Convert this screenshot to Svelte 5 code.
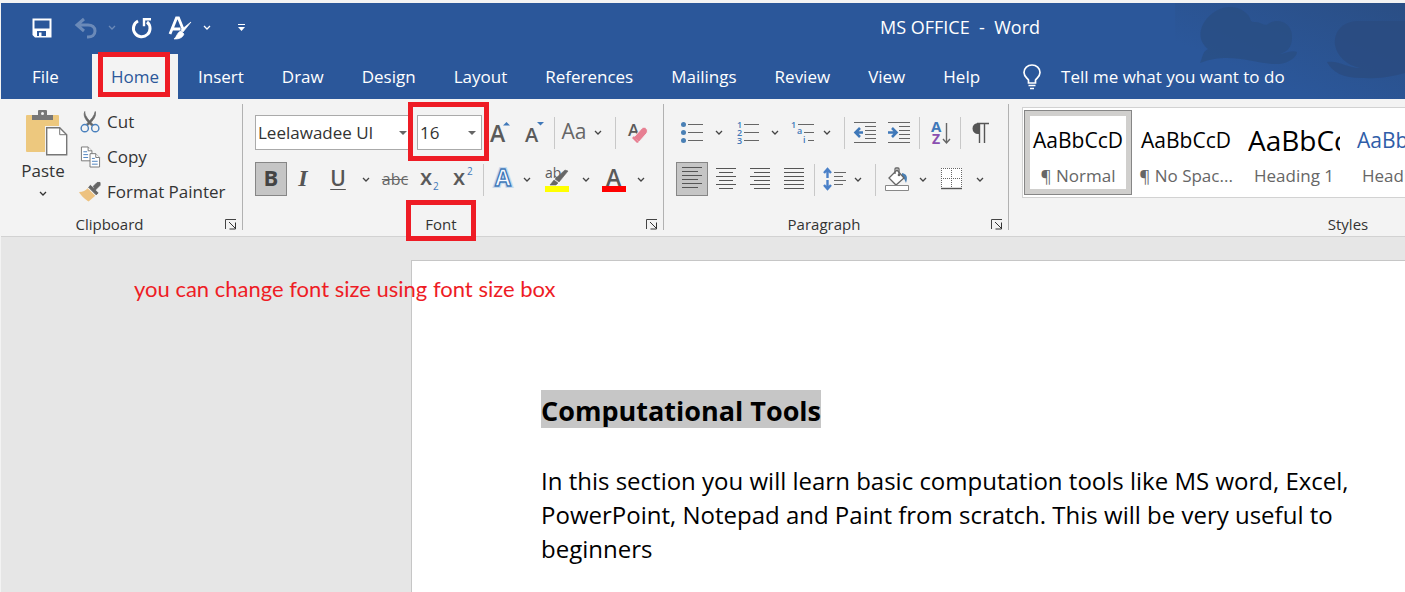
<script>
  const tabs = ['Insert', 'Draw', 'Design', 'Layout', 'References', 'Mailings', 'Review', 'View', 'Help'];
  const styles = [
    { sample: 'AaBbCcD', name: '¶ Normal', kind: 'body', selected: true },
    { sample: 'AaBbCcD', name: '¶ No Spac...', kind: 'body' },
    { sample: 'AaBbCc', name: 'Heading 1', kind: 'big' },
    { sample: 'AaBbCcD', name: 'Heading 2', kind: 'blue' }
  ];
  const aligns = [
    { label: 'Align left', x: [0, 0, 0, 0, 0, 0], w: [20, 16, 20, 16, 20, 16] },
    { label: 'Center', x: [0, 3, 0, 3, 0, 3], w: [20, 14, 20, 14, 20, 14] },
    { label: 'Align right', x: [0, 4, 0, 4, 0, 4], w: [20, 16, 20, 16, 20, 16] },
    { label: 'Justify', x: [0, 0, 0, 0, 0, 0], w: [20, 20, 20, 20, 20, 20] }
  ];
</script>

{#snippet chevron(label)}
  <button class="tool" aria-label={label}>
    <svg width="8" height="5" viewBox="0 0 8 5"><path d="M1 1l3 3 3-3" fill="none" stroke="currentColor" stroke-width="1.3" /></svg>
  </button>
{/snippet}

{#snippet launcher(label)}
  <button class="launcher" aria-label={label}>
    <svg width="12" height="11" viewBox="0 0 12 11" fill="none" stroke="#444"><path d="M.5 10V.5H11" /><path d="M4 3l6 6M10.500 3.500v6.500H4.500" stroke="#333" /></svg>
  </button>
{/snippet}

<div class="app">
  <header>
    <svg class="art" width="230" height="96" viewBox="0 0 230 96" aria-hidden="true">
      <defs><linearGradient id="shade" x1="0" y1="1" x2="1" y2="0"><stop offset=".3" stop-color="#2a4d82" stop-opacity="0" /><stop offset="1" stop-color="#2a4d82" stop-opacity=".9" /></linearGradient></defs>
      <rect width="230" height="96" fill="url(#shade)" />
      <path d="M25 60C28 54 27 49 33 46 24 39 23 28 30 18 41 2 61 0 71 10 77 15 74 19 79 19 86 18 89 24 93 21 103 14 118 20 117 35 117 44 112 49 105 51 112 50 117 47 122 49 122 54 114 60 104 61 78 62 58 48 25 60Z" fill="#2a4d82" opacity=".75" />
      <path d="M230 18H183C165 19 159 30 160 42 162 53 171 62 185 65 172 65 164 57 152 59 157 70 171 76 190 75 207 76 218 73 230 70Z" fill="#2a4b7f" opacity=".8" />
    </svg>
    <div class="titlebar">
      <div class="quick">
        <button aria-label="Save"><svg width="20" height="20" viewBox="0 0 20 20"><path fill-rule="evenodd" d="M.5.500h19v19H3l-2.500-2.500zM2.500 2.500v8h15v-8zM5 13v5h9v-5z" fill="#fff" /><path d="M7 14.500h2.500V19H7z" fill="#fff" /></svg></button>
        <button aria-label="Undo" class="faded undo"><svg width="22" height="20" viewBox="0 0 22 20" fill="none" stroke="#fff" stroke-width="3"><path d="M9 1L2 7l7 6M2 7h11c4 0 7 2 7 6s-3 6-7 6h-1" /></svg></button>
        <span class="faded">{@render chevron('Undo history')}</span>
        <button aria-label="Repeat"><svg width="22" height="22" viewBox="0 0 22 22" fill="none" stroke="#fff" stroke-width="3"><path d="M7 4a8.300 8.300 0 1 0 9 1" /><path d="M20 2.300h-7v7" stroke-width="2.400" /></svg></button>
        <button aria-label="Styles painter"><svg width="24" height="24" viewBox="0 0 24 24"><path d="M2 18L8.500 2h2L15 13M4.500 13h8" fill="none" stroke="#fff" stroke-width="2.800" /><path d="M23 6l-8 10-2-2zM13 15l3 3c-2 5-7 5-10 5 3-2 3-7 7-8z" fill="#fff" stroke="#fff" stroke-width=".7" /></svg></button>
        {@render chevron('Painter options')}
        <button aria-label="Customize toolbar"><svg width="9" height="8" viewBox="0 0 9 8"><path d="M1 .5h7" stroke="#fff" /><path d="M1 3h7L4.500 7z" fill="#fff" /></svg></button>
      </div>
      <h1>MS OFFICE&nbsp; -&nbsp; Word</h1>
    </div>
    <nav>
      <a class="file" href="#file">File</a>
      <a class="active" href="#home">Home<span class="mark mark-home"></span></a>
      {#each tabs as tab}<a href="#{tab}">{tab}</a>{/each}
      <button class="tell">
        <svg width="18" height="26" viewBox="0 0 18 26" fill="none" stroke="#fff" stroke-width="1.700"><path d="M5.500 19v-3C3 13 1 12 1 8.500a8 7.500 0 0 1 16 0c0 3.500-2 4.500-4.500 7.500v3zM5.500 21.500h7M7 24.500h4" /></svg>
        Tell me what you want to do
      </button>
    </nav>
  </header>

  <section class="ribbon">
    <div class="group clipboard">
      <div class="clip-body">
        <button class="paste">
          <svg class="board" width="42" height="46" viewBox="0 0 42 46"><rect y="5" width="33" height="37" rx="1" fill="#edc87e" /><path d="M6 10V5h6V1q0-1 1-1h7q1 0 1 1v4h6v5z" fill="#777" /><circle cx="16.500" cy="3.500" r="1.500" fill="#f3f3f3" /><path d="M19 16h15l8 8v22H19z" fill="#f3f3f3" /><path d="M20.700 17.700h13l7 7v20h-20z" fill="#fff" stroke="#777" stroke-width="1.400" /><path d="M33.700 17.700v7h7" fill="none" stroke="#777" /></svg>
          <span>Paste</span>
          <svg width="8" height="5" viewBox="0 0 8 5"><path d="M1 1l3 3 3-3" fill="none" stroke="#333" stroke-width="1.300" /></svg>
        </button>
        <div class="clip-list">
          <button><svg width="21" height="22" viewBox="0 0 22 22" fill="none"><path d="M5 0c0 4 2 7 9 14l-2 1C6 9 3 5 5 0zM16 0c1 5-1 8-8 15l-1-2c5-5 8-8 9-13z" fill="#666" stroke="#666" stroke-width=".8" /><circle cx="5" cy="17.500" r="3.800" stroke="#4a80bd" stroke-width="1.500" /><circle cx="16" cy="17.500" r="3.800" stroke="#4a80bd" stroke-width="1.500" /></svg>Cut</button>
          <button><svg width="21" height="22" viewBox="0 0 22 22" fill="#fff" stroke="#777"><path d="M1.500.5h7l4 4V15h-11z" /><path d="M8.500.5v4h4" /><path d="M3.500 5.500h4M3.500 8.500h5M3.500 11.500h5" stroke="#4a80bd" /><path d="M10.500 7.500h6l4 4v10h-10z" /><path d="M16.500 7.500v4h4" /><path d="M12.500 12.500h3M12.500 15.500h6M12.500 18.500h6" stroke="#4a80bd" /></svg>Copy</button>
          <button><svg width="21" height="22" viewBox="0 0 22 22"><path d="M-1 11c4 0 7-2 9-4l8 8-7 6C6 19 1 15-1 11z" fill="#edc280" /><path d="M9 6l2-2 8 8-2 2zM14 5l4-4 3 0v3l-5 5z" fill="#666" stroke="#666" /></svg>Format Painter</button>
        </div>
      </div>
      <footer>Clipboard{@render launcher('Clipboard options')}</footer>
    </div>

    <div class="group font">
      <div class="rows">
        <div class="row font-top">
          <label class="combo family"><select aria-label="Font"><option>Leelawadee UI</option></select></label>
          <label class="combo"><select aria-label="Font size"><option>16</option></select><span class="mark mark-size"></span></label>
          <button class="tool" aria-label="Grow font"><svg width="22" height="24" viewBox="0 0 22 24"><text x="1" y="21" font-size="23" font-weight="600">A</text><path d="M14 4.500h7L17.500 1z" fill="#3f78b9" /></svg></button>
          <button class="tool" aria-label="Shrink font"><svg width="22" height="24" viewBox="0 0 22 24"><text x="1" y="21" font-size="20" font-weight="600">A</text><path d="M13 1h7l-3.500 3.500z" fill="#3f78b9" /></svg></button>
          <i class="sep"></i>
          <button class="tool case">Aa</button>
          {@render chevron('Change case')}
          <i class="sep"></i>
          <button class="tool" aria-label="Clear formatting"><svg width="22" height="24" viewBox="0 0 22 24"><text x="1" y="15" font-size="17" font-weight="600">A</text><path d="M7 16L15 7q2-2 4 0l1 1q1 2 0 4l-8 9z" fill="#e77f92" stroke="#f3f3f3" /><path d="M5 17l5 5 2-1-5-6z" fill="#e77f92" /></svg></button>
        </div>
        <div class="row font-bottom">
          <button class="tool on bold">B</button>
          <button class="tool italic">I</button>
          <button class="tool under">U</button>
          {@render chevron('Underline options')}
          <button class="tool strike">abc</button>
          <button class="tool" aria-label="Subscript"><svg width="20" height="24" viewBox="0 0 20 24"><text x="0" y="17" font-size="22" font-weight="600">x</text><text class="blue" x="13" y="22" font-size="10">2</text></svg></button>
          <button class="tool" aria-label="Superscript"><svg width="20" height="24" viewBox="0 0 20 24"><text x="0" y="17" font-size="22" font-weight="600">x</text><text class="blue" x="14" y="7" font-size="10">2</text></svg></button>
          <i class="sep"></i>
          <button class="tool" aria-label="Text effects"><svg width="22" height="24" viewBox="0 0 22 24"><text class="outline halo" x="3" y="18" font-size="23" font-weight="700">A</text><text class="outline" x="3" y="18" font-size="23" font-weight="700">A</text></svg></button>
          {@render chevron('Text effect options')}
          <button class="tool" aria-label="Highlight"><svg width="24" height="24" viewBox="0 0 24 24"><text x="0" y="10" font-size="14">ab</text><path d="M23 3l-9 11-4-3L20 2zM9 12l4 3-2 2H5z" fill="#666" stroke="#666" stroke-width=".6" /><path d="M0 18h24v6H0z" fill="#ff0" /></svg></button>
          {@render chevron('Highlight colors')}
          <button class="tool" aria-label="Font color"><svg width="24" height="24" viewBox="0 0 24 24"><text x="4" y="18" font-size="23" font-weight="600">A</text><path d="M0 18h24v6H0z" fill="#f00" /></svg></button>
          {@render chevron('Font colors')}
        </div>
      </div>
      <footer><span>Font<span class="mark mark-font"></span></span>{@render launcher('Font options')}</footer>
    </div>

    <div class="group paragraph">
      <div class="rows">
        <div class="row para-top">
          <button class="tool" aria-label="Bullets"><svg width="22" height="22" viewBox="0 0 22 22"><g fill="#4a80b5"><circle cx="2.500" cy="2.500" r="2.500" /><circle cx="2.500" cy="10.500" r="2.500" /><circle cx="2.500" cy="18.500" r="2.500" /></g><path d="M7 2.500h15M7 10.500h15M7 18.500h15" stroke="#666" /></svg></button>
          {@render chevron('Bullet library')}
          <button class="tool" aria-label="Numbering"><svg width="22" height="24" viewBox="0 0 22 24"><g class="blue" font-size="9" font-weight="600"><text x="0" y="7">1</text><text x="0" y="15">2</text><text x="0" y="23">3</text></g><path d="M7 3.500h15M7 11.500h15M7 19.500h15" stroke="#666" /></svg></button>
          {@render chevron('Number library')}
          <button class="tool" aria-label="Multilevel list"><svg width="22" height="24" viewBox="0 0 22 24"><g class="blue" font-size="9" font-weight="600"><text x="-1" y="7">1</text><text x="5" y="13">a</text><text x="11" y="22">i</text></g><path d="M6 3.500h16M12 11.500h10M16 19.500h6" stroke="#666" /></svg></button>
          {@render chevron('List library')}
          <i class="sep"></i>
          <button class="tool" aria-label="Decrease indent"><svg width="22" height="22" viewBox="0 0 22 22"><path d="M0 .5h22M11 4.500h11M11 8.500h11M11 12.500h11M11 16.500h11M0 20.500h22" stroke="#666" /><path d="M9 10.500H2M6 6L1.500 10.500 6 15" fill="none" stroke="#3f78b9" stroke-width="2.600" /></svg></button>
          <button class="tool" aria-label="Increase indent"><svg width="22" height="22" viewBox="0 0 22 22"><path d="M0 .5h22M11 4.500h11M11 8.500h11M11 12.500h11M11 16.500h11M0 20.500h22" stroke="#666" /><path d="M0 10.500h8M4 6L8.500 10.500 4 15" fill="none" stroke="#3f78b9" stroke-width="2.600" /></svg></button>
          <i class="sep"></i>
          <button class="tool" aria-label="Sort"><svg width="20" height="26" viewBox="0 0 20 26"><text class="blue" x="1" y="12" font-size="15" font-weight="700">A</text><text class="violet" x="2" y="24" font-size="14" font-weight="700">Z</text><path d="M16.500 3v20M13 19l3.500 4 3.500-4" fill="none" stroke="#666" stroke-width="1.400" /></svg></button>
          <i class="sep"></i>
          <button class="tool" aria-label="Show marks"><svg width="17" height="22" viewBox="0 0 17 22"><path d="M16 1H6a5.500 5.500 0 0 0 0 11h1V1" fill="#555" /><path d="M5 1.500h12M7.500 1v20M12.500 1v20" fill="none" stroke="#555" stroke-width="1.400" /></svg></button>
        </div>
        <div class="row para-bottom">
          {#each aligns as a, n}
            <button class="tool" class:on={n === 0} aria-label={a.label}><svg width="20" height="24" viewBox="0 0 20 24">{#each a.w as w, i}<rect x={a.x[i]} y={i * 4} width={w} height="1" fill="#555" />{/each}</svg></button>
          {/each}
          <i class="sep"></i>
          <button class="tool" aria-label="Line spacing"><svg width="23" height="26" viewBox="0 0 23 26"><path d="M4.500 2v9M1 6l3.500-4L8 6M4.500 13v9M1 18l3.500 4L8 18" fill="none" stroke="#4a80c8" stroke-width="2.400" /><path d="M11 5.500h12M11 9.500h9M11 13.500h12M11 17.500h9" stroke="#666" /></svg></button>
          {@render chevron('Line spacing options')}
          <i class="sep"></i>
          <button class="tool" aria-label="Shading"><svg width="24" height="26" viewBox="0 0 24 26"><path d="M17 6c5 1 6 4 4 10-1-2-1-4-4-6z" fill="#4a80b5" /><path d="M4 11l8-8 7 8-8 7z" fill="#fff" stroke="#666" stroke-width="1.300" /><path d="M10 7V2q0-1 1-1h2q1 0 1 1v6" fill="none" stroke="#666" stroke-width="1.300" /><circle cx="14" cy="8" r="1.300" fill="#666" /><path d="M.5 18.500h23v5H.5z" fill="#fff" stroke="#888" /></svg></button>
          {@render chevron('Shading colors')}
          <button class="tool" aria-label="Borders"><svg width="21" height="24" viewBox="0 0 21 24"><path d="M0 0h21v21H0z" fill="#fff" /><path d="M0 .5h21M.5 0v21M20.500 0v21M10.500 0v21M0 10.500h21" stroke="#666" stroke-dasharray="1 1" /><path d="M0 20.500h21" stroke="#555" stroke-width="1.400" /></svg></button>
          {@render chevron('Border options')}
        </div>
      </div>
      <footer>Paragraph{@render launcher('Paragraph options')}</footer>
    </div>

    <div class="group styles">
      <div class="gallery">
        {#each styles as s}
          <button class="style {s.kind}" class:selected={s.selected}><span class="sample">{s.sample}</span><span class="name">{s.name}</span></button>
        {/each}
      </div>
      <footer>Styles</footer>
    </div>
  </section>

  <main>
    <p class="note">you can change font size using font size box</p>
    <article>
      <h2><mark>Computational Tools</mark></h2>
      <p>In this section you will learn basic computation tools like MS word, Excel, PowerPoint, Notepad and Paint from scratch. This will be very useful to beginners</p>
    </article>
  </main>
</div>

<style>
  :global(body) { margin: 0; background: #e6e6e6; }
  .app { min-height: 100vh; box-sizing: border-box; display: flex; flex-direction: column; border-top: 3px solid #f3f3f3; border-left: 1px solid #f3f3f3; font: 17px/24px "Open Sans", sans-serif; color: #333; overflow: hidden; }
  button { display: flex; align-items: center; justify-content: center; border: 0; padding: 0; margin: 0; background: none; color: inherit; font: inherit; white-space: nowrap; }
  svg { display: block; flex: none; overflow: visible; }
  text { fill: #5a5a5a; }
  .blue, .blue text { fill: #3f78b9; }
  .violet { fill: #8a4fb0; }

  header { position: relative; background: #2b579a; color: #fff; }
  .art { position: absolute; right: 0; top: 0; }
  .titlebar { display: grid; height: 51px; }
  .titlebar > * { grid-area: 1 / 1; }
  .quick { position: relative; justify-self: start; margin-left: 31px; display: grid; grid-template-columns: 20px 56px 8px 52px 24px 30px 38px; height: 49px; }
  .quick > span { display: flex; }
  .undo { margin-left: 12px; }
  .faded { opacity: .3; }
  h1 { margin: 0; padding-left: 514px; text-align: center; font: inherit; font-size: 18px; line-height: 49px; }
  nav { position: relative; display: flex; height: 45px; }
  nav a { display: flex; align-items: center; padding: 0 19px; color: inherit; text-decoration: none; }
  nav .file { padding: 0 33px 0 31px; }
  nav .active { position: relative; margin-right: 1px; background: #f3f3f3; color: #2b579a; }
  .tell { gap: 20px; padding-left: 24px; }

  .mark { position: absolute; border: 5px solid #ee1c25; pointer-events: none; z-index: 2; }
  .mark-home { inset: -2px 8px 2px 6px; }
  .mark-size { inset: -13px -7px -11px -9px; }
  .mark-font { inset: -12px -19px -5px -19px; }

  .ribbon { display: flex; padding: 5px 0 6px; background: #f3f3f3; border-bottom: 1px solid #d2d2d2; }
  .group { flex: none; display: flex; flex-direction: column; box-sizing: border-box; height: 126px; border-right: 1px solid #b1b1b1; }
  .clipboard { width: 242px; }
  .font { width: 421px; padding-left: 12px; }
  .paragraph { width: 345px; padding-left: 12px; }
  .styles { width: 678px; padding: 3px 0 0 13px; }
  .font footer, .paragraph footer, .styles footer { margin-left: -12px; }
  footer { position: relative; display: flex; justify-content: center; margin-top: auto; padding-right: 24px; font-size: 15px; line-height: 24px; height: 12px; align-items: center; }
  footer > span { position: relative; }
  .styles footer { padding-right: 0; }
  .launcher { position: absolute; right: 5px; top: 1px; }

  .clip-body { display: flex; }
  .paste { flex-direction: column; justify-content: flex-start; box-sizing: border-box; width: 74px; padding-top: 6px; margin-left: 5px; }
  .paste span { margin: 3px 0 8px; }
  .board { margin-left: 8px; }
  .clip-list { display: flex; flex-direction: column; }
  .clip-list button { justify-content: flex-start; gap: 6px; height: 35px; }

  .rows { display: flex; flex-direction: column; gap: 12px; padding-top: 11px; }
  .row { display: grid; height: 35px; }
  .font-top { grid-template-columns: 162px 65px 36px 34px 3px 38px 10px 13px 44px; }
  .font-bottom { grid-template-columns: 32px 32px 38px 18px 40px 30px 36px 3px 38px 10px 49px 10px 45px 10px; }
  .para-top { grid-template-columns: 32px 22px 36px 18px 38px 10px 13px 40px 28px 7px 40px 1px 38px; }
  .para-bottom { grid-template-columns: 32px 35px 34px 34px 4px 38px 10px 13px 41px 11px 47px 9px; }
  .sep { justify-self: end; width: 1px; height: 32px; align-self: center; background: #c8c8c8; }
  .tool { color: #444; }
  .quick .tool { color: #fff; }
  .on { box-sizing: border-box; height: 34px; border: 1px solid #868686; background: #c5c5c5; }
  .combo { position: relative; display: flex; }
  .family { margin-right: 4px; }
  .combo select { flex: 1; min-width: 0; appearance: none; margin: 0; padding: 0 2px; border: 1px solid #aaa; border-radius: 0; background: #fff; color: #333; font: inherit; }
  .combo::after { content: ""; position: absolute; right: 6px; top: 16px; border: 4px solid transparent; border-top-color: #666; border-bottom: 0; }
  .case { padding-bottom: 4px; font-size: 21px; color: #666; }
  .bold, .italic, .under { padding-bottom: 4px; }
  .bold { font-size: 22px; font-weight: 700; }
  .italic { font: italic 700 24px/24px "Liberation Serif", serif; color: #555; }
  .under { font-size: 21px; font-weight: 600; text-decoration: underline; text-decoration-thickness: 1px; text-underline-offset: 3px; color: #555; }
  .strike { padding-bottom: 2px; text-decoration: line-through; font-size: 16px; color: #666; }
  .outline { fill: #f8fbff; stroke: #3f78b9; stroke-width: 1.3; }
  .halo { stroke: #a9c9ea; stroke-width: 4; opacity: .6; }

  .gallery { display: flex; box-sizing: border-box; height: 91px; padding: 2px 1px; border: 1px solid #d2d2d2; background: #fff; }
  .style { flex: none; flex-direction: column; justify-content: flex-start; box-sizing: border-box; width: 108px; height: 85px; padding: 10px 8px 0; }
  .selected { border: 1px solid #868686; box-shadow: inset 0 0 0 5px #d0cfcd; padding: 9px 7px 0; }
  .sample { width: 92px; overflow: hidden; text-align: center; font-size: 21px; line-height: 40px; color: #000; }
  .big .sample { text-align: left; font-size: 28px; }
  .blue .sample { color: #2f5da8; }
  .name { line-height: 32px; color: #666; }

  main { position: relative; flex: 1; display: flex; padding: 23px 0 0 410px; background: #e6e6e6; }
  .note { position: absolute; left: 133px; top: 38px; margin: 0; font: 22px/28px Lato, sans-serif; color: #ee1c25; white-space: nowrap; }
  article { flex: 1; padding: 129px 50px 20px 129px; border: 1px solid #c6c6c6; border-width: 1px 0 0 1px; background: #fff; color: #000; }
  h2 { display: flex; margin: 0; font-size: 27px; line-height: 34px; }
  mark { padding-top: 4px; background: #c6c6c6; color: #000; }
  article p { margin: 36px 0 0; font-size: 24px; line-height: 34px; }
</style>
